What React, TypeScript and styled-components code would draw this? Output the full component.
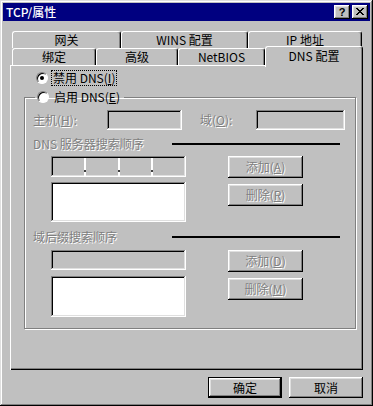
import React from "react";
import styled, { createGlobalStyle, css } from "styled-components";

const GlobalStyle = createGlobalStyle`
  html, body {
    margin: 0;
    background: #c0c0c0;
  }
`;

const raised = css`
  box-shadow: inset -1px -1px #000, inset 1px 1px #fff, inset -2px -2px #808080,
    inset 2px 2px #dfdfdf;
`;

const sunken = css`
  box-shadow: inset -1px -1px #fff, inset 1px 1px #808080, inset -2px -2px #dfdfdf,
    inset 2px 2px #000;
`;

const Window = styled.div`
  width: 373px;
  height: 406px;
  box-sizing: border-box;
  padding: 3px;
  background: #c0c0c0;
  box-shadow: inset -1px -1px #000, inset 1px 1px #dfdfdf, inset -2px -2px #808080,
    inset 2px 2px #fff;
  display: flex;
  flex-direction: column;
  font-family: "Noto Sans CJK SC", "Liberation Sans", sans-serif;
  font-size: 12px;
  line-height: 14px;
  color: #000;
`;

const TitleBar = styled.div`
  height: 18px;
  background: #000080;
  color: #fff;
  display: flex;
  align-items: center;
  justify-content: space-between;
  padding: 0 2px 0 3px;
`;

const TitleText = styled.span`
  font-weight: 500;
`;

const TitleButtons = styled.div`
  display: flex;
  gap: 2px;
`;

const TitleBtn = styled.div`
  width: 16px;
  height: 14px;
  box-sizing: border-box;
  background: #c0c0c0;
  color: #000;
  ${raised};
  display: flex;
  align-items: center;
  justify-content: center;
  font-family: "Liberation Sans", sans-serif;
  font-weight: 700;
  font-size: 11px;
  padding-bottom: 1px;
`;

const Body = styled.div`
  flex: 1;
  display: flex;
  flex-direction: column;
  padding: 10px 7px 0 7px;
`;

const TabRow = styled.div`
  display: flex;
  align-items: flex-end;
  height: 17px;
  padding-left: 2px;
`;

const Tab = styled.div<{ $w: number; $active?: boolean }>`
  width: ${(p) => p.$w}px;
  height: ${(p) => (p.$active ? 21 : 17)}px;
  box-sizing: border-box;
  flex-shrink: 0;
  background: #c0c0c0;
  border: 1px solid;
  border-color: #fff #000 transparent #fff;
  border-bottom: none;
  border-radius: 3px 3px 0 0;
  box-shadow: inset -1px 0 #808080;
  display: flex;
  justify-content: center;
  align-items: ${(p) => (p.$active ? "flex-start" : "center")};
  padding-top: ${(p) => (p.$active ? 2 : 0)}px;
  ${(p) =>
    p.$active &&
    css`
      margin-bottom: -2px;
      position: relative;
      z-index: 1;
    `}
`;

const Panel = styled.div`
  height: 305px;
  box-sizing: border-box;
  box-shadow: inset 1px 1px #fff, inset -1px -1px #000, inset -2px -2px #808080;
  padding: 6px 0 0 14px;
  display: flex;
  flex-direction: column;
  align-items: flex-start;
`;

const RadioRow = styled.div<{ $indent?: number }>`
  display: flex;
  align-items: center;
  height: 14px;
  padding-left: ${(p) => p.$indent ?? 0}px;
`;

const Radio = styled.span<{ $checked?: boolean }>`
  display: inline-flex;
  width: 12px;
  min-width: 12px;
  height: 12px;
  box-sizing: border-box;
  border-radius: 50%;
  background: #fff;
  border: 1px solid;
  border-color: #808080 #fff #fff #808080;
  box-shadow: inset 1px 1px #000;
  align-items: center;
  justify-content: center;
  flex-shrink: 0;

  &::after {
    content: "";
    width: 4px;
    height: 4px;
    border-radius: 50%;
    background: ${(p) => (p.$checked ? "#000" : "transparent")};
  }
`;

const RadioLabel = styled.span<{ $focus?: boolean }>`
  display: inline-block;
  margin-left: 3px;
  padding: 0 1px;
  border: 1px dotted ${(p) => (p.$focus ? "#000" : "transparent")};
  white-space: nowrap;
`;

const GroupBox = styled.fieldset`
  margin: 5px 0 0 0;
  width: 332px;
  height: 239px;
  box-sizing: border-box;
  border: 1px solid #808080;
  box-shadow: 1px 1px 0 #fff, inset 1px 1px 0 #fff;
  padding: 6px 0 0 8px;
  min-width: 0;
`;

const Legend = styled.legend`
  padding: 0 2px;
  margin-left: 2px;
`;

const Text = styled.span<{ $disabled?: boolean }>`
  white-space: nowrap;
  ${(p) =>
    p.$disabled &&
    css`
      color: #808080;
      text-shadow: 1px 1px 0 #fff;
    `}
`;

const HostRow = styled.div`
  display: flex;
  align-items: center;
  height: 20px;
`;

const FieldLabel = styled(Text)<{ $w: number; $gap?: number }>`
  width: ${(p) => p.$w}px;
  margin-left: ${(p) => p.$gap ?? 0}px;
  flex-shrink: 0;
`;

const TextBox = styled.div<{ $w?: number; $h?: number }>`
  width: ${(p) => (p.$w ? `${p.$w}px` : "auto")};
  height: ${(p) => p.$h ?? 20}px;
  box-sizing: border-box;
  background: #c0c0c0;
  ${sunken};
  flex-shrink: 0;
`;

const ListBox = styled(TextBox)`
  background: #fff;
`;

const SectionHeader = styled.div<{ $top: number }>`
  display: grid;
  grid-template-columns: 139px 168px;
  align-items: center;
  height: 14px;
  margin-top: ${(p) => p.$top}px;
`;

const Rule = styled.div`
  height: 2px;
  background: #000;
`;

const ListSection = styled.div<{ $top: number }>`
  display: flex;
  align-items: flex-start;
  margin: ${(p) => p.$top}px 0 0 18px;
`;

const LeftCol = styled.div<{ $gap: number }>`
  width: 135px;
  display: flex;
  flex-direction: column;
  gap: ${(p) => p.$gap}px;
`;

const IPField = styled.div`
  height: 21px;
  box-sizing: border-box;
  background: #c0c0c0;
  ${sunken};
  display: flex;
  padding: 2px 2px 1px 2px;
`;

const Segment = styled.div`
  flex: 1;
`;

const Sep = styled.div`
  width: 2px;
  background: #fff;
  display: flex;
  flex-direction: column;
  justify-content: flex-end;
  padding-bottom: 4px;
`;

const Dot = styled.div`
  width: 2px;
  height: 2px;
  background: #404040;
`;

const ButtonCol = styled.div`
  width: 75px;
  margin-left: 42px;
  display: flex;
  flex-direction: column;
  gap: 6px;
`;

const Button = styled.div<{ $w?: number; $h?: number; $default?: boolean }>`
  width: ${(p) => (p.$w ? `${p.$w}px` : "100%")};
  height: ${(p) => p.$h ?? 22}px;
  box-sizing: border-box;
  background: #c0c0c0;
  ${raised};
  display: flex;
  align-items: center;
  justify-content: center;
  ${(p) =>
    p.$default &&
    css`
      border: 1px solid #000;
    `}
`;

const Footer = styled.div`
  display: flex;
  justify-content: flex-end;
  gap: 7px;
  margin-top: 7px;
`;

const CloseIcon = () => (
  <svg width="8" height="7" viewBox="0 0 8 7" shapeRendering="crispEdges">
    <path
      fill="#000"
      d="M0 0h2v1H0zM6 0h2v1H6zM1 1h2v1H1zM5 1h2v1H5zM2 2h4v1H2zM3 3h2v1H3zM2 4h4v1H2zM1 5h2v1H1zM5 5h2v1H5zM0 6h2v1H0zM6 6h2v1H6z"
    />
  </svg>
);

const IPAddress = () => (
  <IPField>
    <Segment />
    <Sep><Dot /></Sep>
    <Segment />
    <Sep><Dot /></Sep>
    <Segment />
    <Sep><Dot /></Sep>
    <Segment />
  </IPField>
);

const App = () => {
  return (
    <>
      <GlobalStyle />
      <Window>
        <TitleBar>
          <TitleText>TCP/属性</TitleText>
          <TitleButtons>
            <TitleBtn>?</TitleBtn>
            <TitleBtn>
              <CloseIcon />
            </TitleBtn>
          </TitleButtons>
        </TitleBar>

        <Body>
          <TabRow>
            <Tab $w={109}>网关</Tab>
            <Tab $w={127}>WINS 配置</Tab>
            <Tab $w={114}>IP 地址</Tab>
          </TabRow>
          <TabRow>
            <Tab $w={84}>绑定</Tab>
            <Tab $w={82}>高级</Tab>
            <Tab $w={87}>NetBIOS</Tab>
            <Tab $w={98} $active>
              DNS 配置
            </Tab>
          </TabRow>

          <Panel>
            <RadioRow $indent={12}>
              <Radio $checked />
              <RadioLabel $focus>
                禁用 DNS(<u>I</u>)
              </RadioLabel>
            </RadioRow>

            <GroupBox>
              <Legend>
                <RadioRow>
                  <Radio />
                  <RadioLabel>
                    启用 DNS(<u>E</u>)
                  </RadioLabel>
                </RadioRow>
              </Legend>

              <HostRow>
                <FieldLabel $w={74} $disabled>
                  主机(<u>H</u>):
                </FieldLabel>
                <TextBox $w={75} />
                <FieldLabel $w={56} $gap={18} $disabled>
                  域(<u>O</u>):
                </FieldLabel>
                <TextBox $w={89} />
              </HostRow>

              <SectionHeader $top={7}>
                <Text $disabled>DNS 服务器搜索顺序</Text>
                <Rule />
              </SectionHeader>
              <ListSection $top={5}>
                <LeftCol $gap={5}>
                  <IPAddress />
                  <ListBox $h={40} />
                </LeftCol>
                <ButtonCol>
                  <Button>
                    <Text $disabled>
                      添加(<u>A</u>)
                    </Text>
                  </Button>
                  <Button>
                    <Text $disabled>
                      删除(<u>R</u>)
                    </Text>
                  </Button>
                </ButtonCol>
              </ListSection>

              <SectionHeader $top={8}>
                <Text $disabled>域后缀搜索顺序</Text>
                <Rule />
              </SectionHeader>
              <ListSection $top={6}>
                <LeftCol $gap={6}>
                  <TextBox $h={20} />
                  <ListBox $h={41} />
                </LeftCol>
                <ButtonCol>
                  <Button>
                    <Text $disabled>
                      添加(<u>D</u>)
                    </Text>
                  </Button>
                  <Button>
                    <Text $disabled>
                      删除(<u>M</u>)
                    </Text>
                  </Button>
                </ButtonCol>
              </ListSection>
            </GroupBox>
          </Panel>

          <Footer>
            <Button $w={74} $h={21} $default>
              确定
            </Button>
            <Button $w={74} $h={21}>
              取消
            </Button>
          </Footer>
        </Body>
      </Window>
    </>
  );
};

export default App;
